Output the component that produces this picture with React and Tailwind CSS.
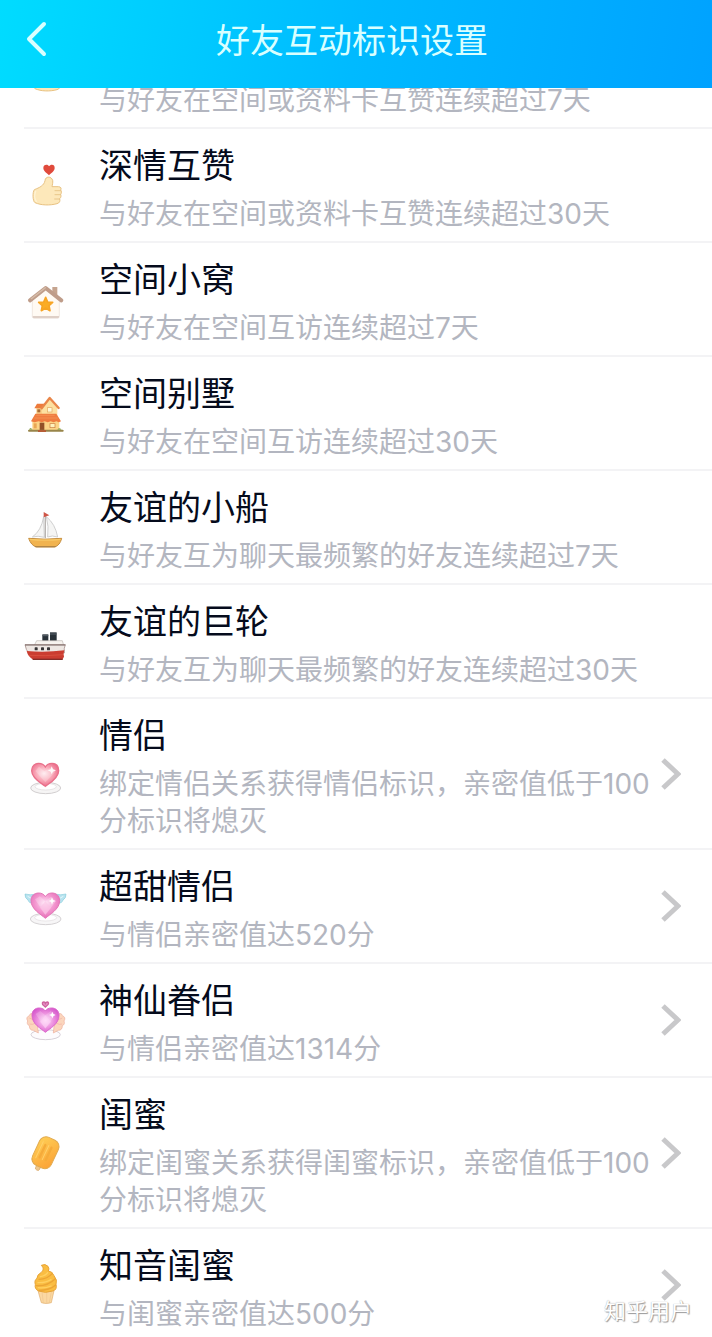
const iconClass = 'h-11 w-11 shrink-0'

const HEART = 'M91 108 C79 99 50 84 50 61 C50 46 60 39 71 39 C80 39 87 43 91 50 C95 43 102 39 111 39 C122 39 131 46 131 61 C131 84 103 99 91 108 Z'

const ThumbIcon = () => (
  <svg className={iconClass} viewBox="27 39 132 132" aria-hidden="true">
    <path d="M102 76 C97 70 85 64 85 54 C85 47 89 44 94 44 C98 44 101 46 102 49 C104 46 107 44 111 44 C116 44 119 47 119 54 C119 64 107 70 102 76 Z" fill="#e04a3c" />
    <path
      d="M90 92 C91 78 109 78 113 91 C114 98 112 105 111 110 L130 110 C138 110 140 116 137 120 C140 124 140 129 137 133 C139 138 138 143 134 146 C136 153 134 159 126 161 C104 167 78 166 60 158 C53 154 52 127 58 119 C73 113 87 107 90 92 Z"
      fill="#fde8ba"
      stroke="#e8c283"
      strokeWidth="3"
    />
    <path d="M120 122 H136 M120 134 H136 M119 147 H133" stroke="#e0b673" strokeWidth="2" strokeLinecap="round" />
    <path d="M62 124 C58 134 59 147 64 154" fill="none" stroke="#fff3d3" strokeWidth="4" strokeLinecap="round" />
  </svg>
)

const HouseIcon = () => (
  <svg className={iconClass} viewBox="27 21 132 132" aria-hidden="true">
    <path d="M112 51 H127 V80 L112 68 Z" fill="#c5a48f" />
    <path d="M52 91 L92 60 L133 91 V140 Q133 144 129 144 H56 Q52 144 52 140 Z" fill="#fffaf3" stroke="#eaded4" strokeWidth="2" />
    <path d="M53 138 H132 V142 Q131 145 128 145 H57 Q54 145 53 142 Z" fill="#dfd0c7" />
    <path d="M45 91 L92 54 L139 91" fill="none" stroke="#bf9d8a" strokeWidth="12" strokeLinecap="round" strokeLinejoin="round" />
    <path d="M49 86 L91 53" stroke="#d6bda9" strokeWidth="4" strokeLinecap="round" />
    <path d="M92 82 L98 96 L113 97 L102 107 L105 122 L92 114 L79 122 L82 107 L71 97 L86 96 Z" fill="#fbac24" stroke="#f7a423" strokeWidth="5" strokeLinejoin="round" />
  </svg>
)

const VillaIcon = () => (
  <svg className={iconClass} viewBox="27 18 132 132" aria-hidden="true">
    <path d="M64 65 H126 V94 H64 Z" fill="#fbd18a" />
    <path d="M81 68 L104 43 L127 68 V93 H81 Z" fill="#fde0a0" />
    <path d="M58 70 L66 56 H91 L80 70 Z" fill="#ed7b3c" />
    <path d="M80 70 L104 39 L131 69" fill="none" stroke="#e98649" strokeWidth="7" strokeLinecap="round" strokeLinejoin="round" />
    <rect x="97" y="68" width="14" height="13" fill="#fff9d8" stroke="#e3a55c" strokeWidth="2" />
    <rect x="67" y="73" width="9" height="9" fill="#a96b36" />
    <path d="M52 106 H133 V137 H52 Z" fill="#fcd487" />
    <path d="M48 109 L61 86 H124 L138 109 Q132 114 124 109 Q116 114 107 109 Q98 114 89 109 Q80 114 71 109 Q59 114 48 109 Z" fill="#ef7c40" />
    <path d="M64 91 H119 M58 99 H128" stroke="#f48f50" strokeWidth="3" />
    <rect x="74" y="113" width="14" height="24" fill="#925027" />
    <rect x="105" y="116" width="15" height="12" fill="#fff2bd" stroke="#c97d3e" strokeWidth="2" />
    <path d="M56 115 H65 V130 H56 Z" fill="#e9a655" />
    <path d="M42 137 H143" stroke="#98854a" strokeWidth="6" strokeLinecap="round" />
    <path d="M69 138 H93" stroke="#b65e36" strokeWidth="6" />
    <path d="M42 134 Q46 124 53 134 M127 134 Q132 126 140 134" fill="#8ca352" />
  </svg>
)

const SailboatIcon = () => (
  <svg className={iconClass} viewBox="27 15 132 132" aria-hidden="true">
    <path d="M86 50 Q79 92 52 111 Q69 106 88 112 Z" fill="#f5f5f4" stroke="#c7c7c6" strokeWidth="2.5" />
    <path d="M94 50 Q121 72 128 111 Q111 105 98 111 Q102 79 94 50 Z" fill="#f5f5f4" stroke="#c7c7c6" strokeWidth="2.5" />
    <path d="M91 48 V115" stroke="#b8b4b1" strokeWidth="4" />
    <path d="M86 36 L103 46 L86 52 Z" fill="#cf5547" />
    <path d="M41 115 Q90 120 140 115 Q135 136 119 141 H64 Q48 136 41 115 Z" fill="#f1b34f" stroke="#c48c3d" strokeWidth="3" />
    <path d="M44 118 Q90 123 137 118" fill="none" stroke="#f7c968" strokeWidth="4" />
    <path d="M60 140 H122" stroke="#a98046" strokeWidth="3" />
  </svg>
)

const ShipIcon = () => (
  <svg className={iconClass} viewBox="27 -3 132 132" aria-hidden="true">
    <rect x="82" y="43" width="18" height="22" fill="#283138" />
    <rect x="105" y="37" width="20" height="27" fill="#283138" />
    <path d="M82 47 H100 M105 42 H125" stroke="#59636b" strokeWidth="3" />
    <path d="M65 62 H142 L146 76 H58 Z" fill="#f7f3ef" stroke="#beb8b4" strokeWidth="2" />
    <path d="M30 74 H151 Q146 85 148 99 H41 Q33 91 30 74 Z" fill="#eee7e3" stroke="#967974" strokeWidth="2" />
    <path d="M30 75 H151" stroke="#7c6a68" strokeWidth="3" />
    <path d="M35 93 Q91 98 148 91 Q144 103 147 110 L142 119 H55 Q39 111 35 93 Z" fill="#cb3d31" />
    <path d="M43 106 Q88 109 144 104" fill="none" stroke="#d8503f" strokeWidth="3" />
    <path d="M53 118 H143" stroke="#842d29" strokeWidth="4" />
    <rect x="59" y="82" width="9" height="9" rx="2" fill="#383638" />
    <rect x="78" y="82" width="9" height="9" rx="2" fill="#383638" />
    <rect x="96" y="82" width="9" height="9" rx="2" fill="#383638" />
  </svg>
)

const CoupleIcon = () => (
  <svg className={iconClass} viewBox="27 5 132 132" aria-hidden="true">
    <defs>
      <radialGradient id="coupleFill" cx="46%" cy="44%" r="60%">
        <stop offset="0" stopColor="#ffe8ed" />
        <stop offset="0.5" stopColor="#f9a9b8" />
        <stop offset="1" stopColor="#ea6787" />
      </radialGradient>
    </defs>
    <ellipse cx="92" cy="113" rx="45" ry="17" fill="#f6f5f5" stroke="#d2cfd0" strokeWidth="3" />
    <ellipse cx="92" cy="109" rx="32" ry="10" fill="#fff" stroke="#dedadb" strokeWidth="2" />
    <path d={HEART} fill="url(#coupleFill)" stroke="#e9708a" strokeWidth="4" />
    <path d="M61 62 L72 49 L88 63 L110 50 L121 64 L91 96 Z" fill="#fff" opacity="0.24" />
    <path d="M110 48 L114 57 L123 60 L114 64 L110 72 L107 64 L98 60 L107 57 Z" fill="#fff" opacity="0.9" />
  </svg>
)

const SweetCoupleIcon = () => (
  <svg className={iconClass} viewBox="27 15 132 132" aria-hidden="true">
    <defs>
      <radialGradient id="sweetFill" cx="48%" cy="40%" r="62%">
        <stop offset="0" stopColor="#ffe1f5" />
        <stop offset="0.5" stopColor="#f49bd2" />
        <stop offset="1" stopColor="#e56bb5" />
      </radialGradient>
    </defs>
    <ellipse cx="92" cy="120" rx="46" ry="17" fill="#f7f6f7" stroke="#d5d2d4" strokeWidth="3" />
    <ellipse cx="92" cy="116" rx="33" ry="10" fill="#fff" stroke="#e1dde0" strokeWidth="2" />
    <path d="M56 72 Q42 74 39 63 Q29 57 30 45 Q47 49 59 46 Z" fill="#b7e3ef" stroke="#8bcddd" strokeWidth="2" />
    <path d="M127 72 Q141 74 144 63 Q154 57 153 45 Q136 49 124 46 Z" fill="#b7e3ef" stroke="#8bcddd" strokeWidth="2" />
    <path d="M38 52 Q46 59 57 57 M145 52 Q137 59 126 57" fill="none" stroke="#e7f8fb" strokeWidth="3" />
    <path d="M91 118 C78 106 48 91 48 65 C48 50 59 42 71 42 C80 42 87 46 91 53 C95 46 102 42 111 42 C123 42 134 50 134 65 C134 91 104 106 91 118 Z" fill="url(#sweetFill)" stroke="#e476b7" strokeWidth="3" />
    <path d="M60 61 L75 52 L91 67 L108 53 L123 67 L91 107 Z" fill="#fff" opacity="0.25" />
    <path d="M91 67 L75 86 L91 107 L108 86 Z" fill="#fbc2e5" opacity="0.6" />
    <path d="M111 55 L114 63 L122 66 L114 69 L111 77 L108 69 L100 66 L108 63 Z" fill="#fff" />
  </svg>
)

const FairyCoupleIcon = () => (
  <svg className={iconClass} viewBox="27 27 132 132" aria-hidden="true">
    <defs>
      <radialGradient id="fairyFill" cx="50%" cy="52%" r="60%">
        <stop offset="0" stopColor="#ffe2fb" />
        <stop offset="0.5" stopColor="#ed91df" />
        <stop offset="1" stopColor="#d455cb" />
      </radialGradient>
    </defs>
    <ellipse cx="92" cy="137" rx="44" ry="15" fill="#fdfbfd" stroke="#d8d1d9" strokeWidth="3" />
    <path d="M58 76 Q45 70 43 80 Q31 85 38 96 Q34 106 43 110 Q43 124 55 124 L70 132 L65 84 Z" fill="#fbd6bd" stroke="#edae9c" strokeWidth="2" />
    <path d="M127 76 Q140 70 142 80 Q154 85 147 96 Q151 106 142 110 Q142 124 130 124 L115 132 L120 84 Z" fill="#fbd6bd" stroke="#edae9c" strokeWidth="2" />
    <path d="M43 87 Q50 92 58 90 M44 105 Q52 108 60 103 M142 87 Q135 92 127 90 M141 105 Q133 108 125 103" fill="none" stroke="#f2afa5" strokeWidth="2" />
    <path d="M91 130 C79 119 51 106 51 79 C51 64 61 57 72 57 C81 57 87 60 91 66 C95 60 101 57 110 57 C122 57 132 65 132 79 C132 106 103 119 91 130 Z" fill="url(#fairyFill)" stroke="#db67cc" strokeWidth="3" />
    <path d="M62 75 L76 66 L91 79 L107 66 L121 77 L91 119 Z" fill="#fff" opacity="0.2" />
    <path d="M91 79 L75 98 L91 118 L108 98 Z" fill="#ffd2f6" opacity="0.55" />
    <path d="M91 54 L83 47 Q80 39 87 39 Q90 39 91 43 Q93 39 97 39 Q103 41 99 47 Z" fill="#e58fc4" stroke="#ce639f" strokeWidth="4" />
    <path d="M112 68 L115 75 L122 78 L115 81 L112 88 L109 81 L102 78 L109 75 Z" fill="#fff" />
  </svg>
)

const PopsicleIcon = () => (
  <svg className={iconClass} viewBox="27 20 132 132" aria-hidden="true">
    <defs>
      <linearGradient id="popsicleFill" x1="0" y1="0" x2="1" y2="1">
        <stop offset="0" stopColor="#ffd057" />
        <stop offset="1" stopColor="#fba034" />
      </linearGradient>
    </defs>
    <g transform="rotate(25 91 86)">
      <rect x="83" y="121" width="13" height="22" rx="5" fill="#efc88d" stroke="#d4a263" strokeWidth="2" />
      <rect x="60" y="39" width="62" height="92" rx="21" fill="url(#popsicleFill)" stroke="#e2ab4f" strokeWidth="3" />
      <path d="M81 64 V105 M101 64 V105" stroke="#f5ab3a" strokeWidth="7" strokeLinecap="round" />
      <path d="M71 58 V111 M91 61 V108" stroke="#ffd06a" strokeWidth="3" strokeLinecap="round" />
    </g>
  </svg>
)

const IceCreamIcon = () => (
  <svg className={iconClass} viewBox="27 27 132 132" aria-hidden="true">
    <path d="M69 110 H117 L109 146 Q93 151 79 146 Z" fill="#fbd8a1" stroke="#dfad70" strokeWidth="2" />
    <path d="M81 114 L85 146 M95 114 V148 M109 114 L103 146" stroke="#efc591" strokeWidth="2" />
    <path d="M79 34 Q91 28 99 37 Q104 45 100 51 Q112 52 117 65 Q128 78 123 91 Q127 108 113 111 Q91 119 71 111 Q58 105 61 92 Q57 79 66 73 Q66 62 78 56 Q91 45 79 34 Z" fill="#fabd42" stroke="#e8a437" strokeWidth="3" />
    <path d="M72 76 Q98 75 112 58 M64 95 Q98 97 121 74 M72 109 Q104 109 122 93" fill="none" stroke="#eca535" strokeWidth="4" strokeLinecap="round" />
    <path d="M76 68 Q92 65 98 56 M69 86 Q92 87 108 77 M70 101 Q90 104 108 96" fill="none" stroke="#ffd062" strokeWidth="4" strokeLinecap="round" />
  </svg>
)

const badges = [
  { name: '互赞', desc: '与好友在空间或资料卡互赞连续超过7天', Icon: ThumbIcon },
  { name: '深情互赞', desc: '与好友在空间或资料卡互赞连续超过30天', Icon: ThumbIcon },
  { name: '空间小窝', desc: '与好友在空间互访连续超过7天', Icon: HouseIcon },
  { name: '空间别墅', desc: '与好友在空间互访连续超过30天', Icon: VillaIcon },
  { name: '友谊的小船', desc: '与好友互为聊天最频繁的好友连续超过7天', Icon: SailboatIcon },
  { name: '友谊的巨轮', desc: '与好友互为聊天最频繁的好友连续超过30天', Icon: ShipIcon },
  { name: '情侣', desc: '绑定情侣关系获得情侣标识，亲密值低于100分标识将熄灭', Icon: CoupleIcon, link: true },
  { name: '超甜情侣', desc: '与情侣亲密值达520分', Icon: SweetCoupleIcon, link: true },
  { name: '神仙眷侣', desc: '与情侣亲密值达1314分', Icon: FairyCoupleIcon, link: true },
  { name: '闺蜜', desc: '绑定闺蜜关系获得闺蜜标识，亲密值低于100分标识将熄灭', Icon: PopsicleIcon, link: true },
  { name: '知音闺蜜', desc: '与闺蜜亲密值达500分', Icon: IceCreamIcon, link: true },
]

const BadgeRow = ({ name, desc, Icon, link }) => {
  const Row = link ? 'a' : 'div'

  return (
    <li className="ml-6 border-b-2 border-[#f3f3f5]">
      <Row href={link ? '#' : undefined} className="flex items-center pr-[31px]">
        <Icon />
        <div className="ml-[31px] min-w-0 flex-1 pt-[15px] pb-2">
          <h2 className="text-[34px] leading-[44px] text-[#050b1c]">{name}</h2>
          <p className="mt-2 text-[28px] leading-[37px] text-[#b3b6c0]">{desc}</p>
        </div>
        {link && (
          <svg className="h-8 w-5 shrink-0" viewBox="0 0 20 32" fill="none" aria-hidden="true">
            <path d="M2 2 L17 16 L2 30" stroke="#c8c8ca" strokeWidth="5" />
          </svg>
        )}
      </Row>
    </li>
  )
}

export default function App() {
  return (
    <div className="relative flex h-screen flex-col overflow-hidden bg-white font-['Inter','Noto_Sans_CJK_SC',sans-serif]">
      <header className="z-10 flex h-[88px] shrink-0 items-center bg-linear-100 from-[#00dcff] via-[#00baff] to-[#00a2ff] pb-1.5">
        <button type="button" aria-label="返回" className="flex w-20 justify-start pl-6">
          <svg className="h-10 w-6" viewBox="0 0 24 40" fill="none" aria-hidden="true">
            <path d="M20 3 L5 18 L20 33" stroke="#d9ffff" strokeWidth="4" strokeLinecap="round" strokeLinejoin="round" />
          </svg>
        </button>
        <h1 className="flex-1 text-center text-[34px] leading-[44px] text-[#d9ffff]">好友互动标识设置</h1>
        <div className="w-[88px]" />
      </header>

      {/* the list is scrolled part way under the header */}
      <main className="min-h-0 flex-1">
        <ul className="-mt-[73px]">
          {badges.map((badge) => (
            <BadgeRow key={badge.name} {...badge} />
          ))}
        </ul>
      </main>

      <span className="absolute right-5 bottom-3 text-[22px] leading-7 text-white [text-shadow:0_0_1px_#9a9a9c,1px_1px_1px_#98989a]">
        知乎用户
      </span>
    </div>
  )
}
